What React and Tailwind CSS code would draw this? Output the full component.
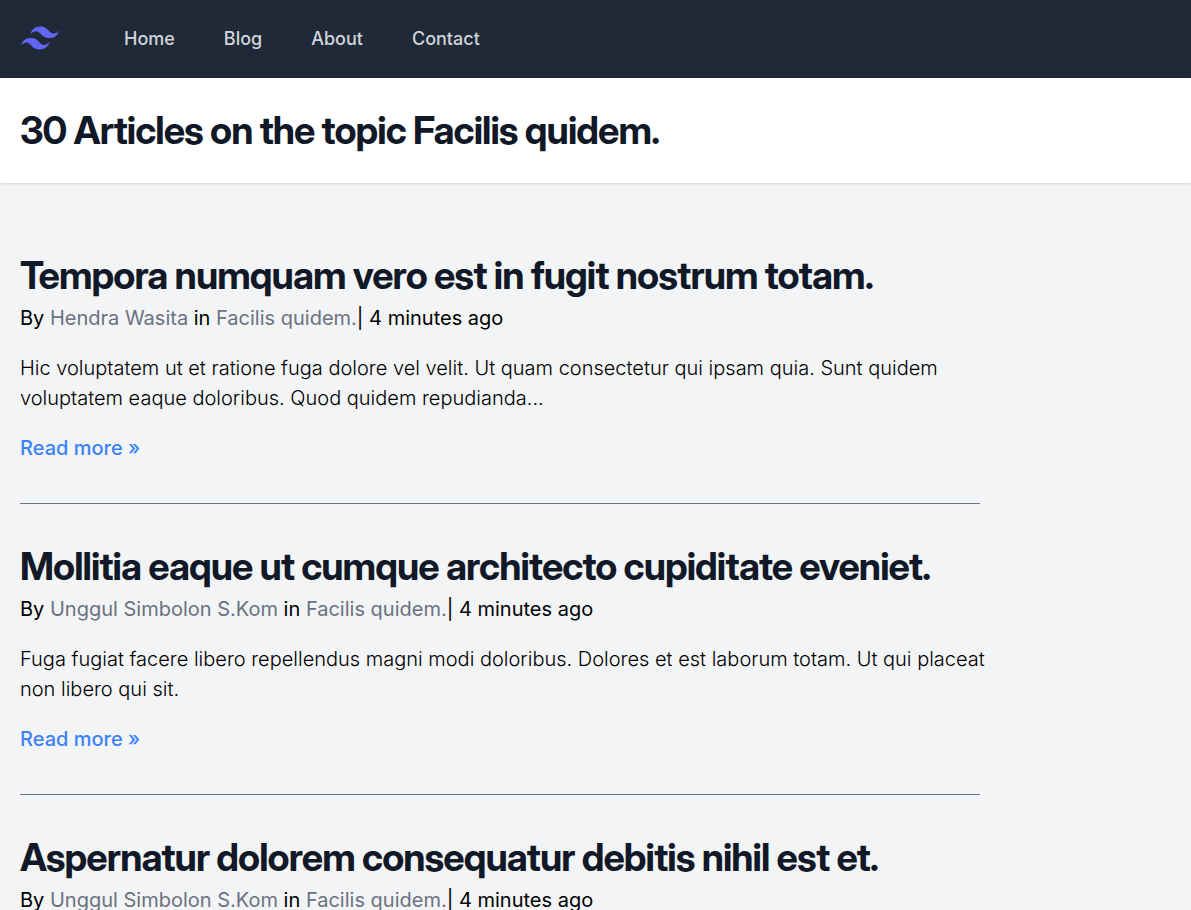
const posts = [
  {
    title: 'Tempora numquam vero est in fugit nostrum totam.',
    author: 'Hendra Wasita',
    body: 'Hic voluptatem ut et ratione fuga dolore vel velit. Ut quam consectetur qui ipsam quia. Sunt quidem voluptatem eaque doloribus. Quod quidem repudianda...',
  },
  {
    title: 'Mollitia eaque ut cumque architecto cupiditate eveniet.',
    author: 'Unggul Simbolon S.Kom',
    body: 'Fuga fugiat facere libero repellendus magni modi doloribus. Dolores et est laborum totam. Ut qui placeat non libero qui sit.',
  },
  {
    title: 'Aspernatur dolorem consequatur debitis nihil est et.',
    author: 'Unggul Simbolon S.Kom',
  },
];

const links = ['Home', 'Blog', 'About', 'Contact'];

function Logo() {
  return (
    <svg viewBox="-1 0 42 42" className="size-10" fill="#6366f1" aria-hidden="true">
      <path d="M20 8q-8 0-10 8 3-4 7-3c1.522.38 2.61 1.485 3.814 2.707C22.774 17.697 25.042 20 30 20q8 0 10-8-3 4-7 3c-1.522-.38-2.61-1.485-3.814-2.707C27.226 10.303 24.958 8 20 8ZM10 20q-8 0-10 8 3-4 7-3c1.522.38 2.61 1.485 3.814 2.707C12.774 29.697 15.042 32 20 32q8 0 10-8-3 4-7 3c-1.522-.38-2.61-1.485-3.814-2.707C17.226 22.303 14.958 20 10 20Z" />
    </svg>
  );
}

function Post({ title, author, body }) {
  return (
    <article className="max-w-[960px] border-b border-[#6b7280] py-10">
      <h2 className="mb-[5px] font-['Inter_Display','Inter',sans-serif] text-[38px] leading-[45px] font-bold tracking-tight text-[#111827]">
        <a href="#" className="hover:underline">{title}</a>
      </h2>
      <div className="text-xl leading-[30px]">
        By <a href="#" className="text-[#6b7280] hover:underline">{author}</a> in{' '}
        <a href="#" className="text-[#6b7280] hover:underline">Facilis quidem.</a>| 4 minutes ago
      </div>
      {body && (
        <>
          <p className="my-5 -mr-3 text-xl leading-[30px] font-light">{body}</p>
          <a href="#" className="block text-xl leading-[30px] font-medium text-[#3b82f6] hover:underline">
            Read more &raquo;
          </a>
        </>
      )}
    </article>
  );
}

export default function App() {
  return (
    <div className="min-h-screen bg-[#f3f4f6] font-['Inter',sans-serif] text-black">
      <nav className="flex h-[78px] items-center bg-[#1f2937] px-5">
        <Logo />
        <div className="ml-[49px] flex gap-[19px]">
          {links.map((label) => (
            <a key={label} href="#" className="rounded-md px-[15px] py-2.5 text-lg font-medium text-[#d1d5db] hover:text-white">
              {label}
            </a>
          ))}
        </div>
      </nav>
      <header className="bg-white px-5 py-[30px] shadow-sm">
        <h1 className="font-['Inter_Display','Inter',sans-serif] text-[38px] leading-[45px] font-bold tracking-tight text-[#111827]">
          30 Articles on the topic Facilis quidem.
        </h1>
      </header>
      <main className="px-5 py-[30px]">
        {posts.map((post) => (
          <Post key={post.title} {...post} />
        ))}
      </main>
    </div>
  );
}
